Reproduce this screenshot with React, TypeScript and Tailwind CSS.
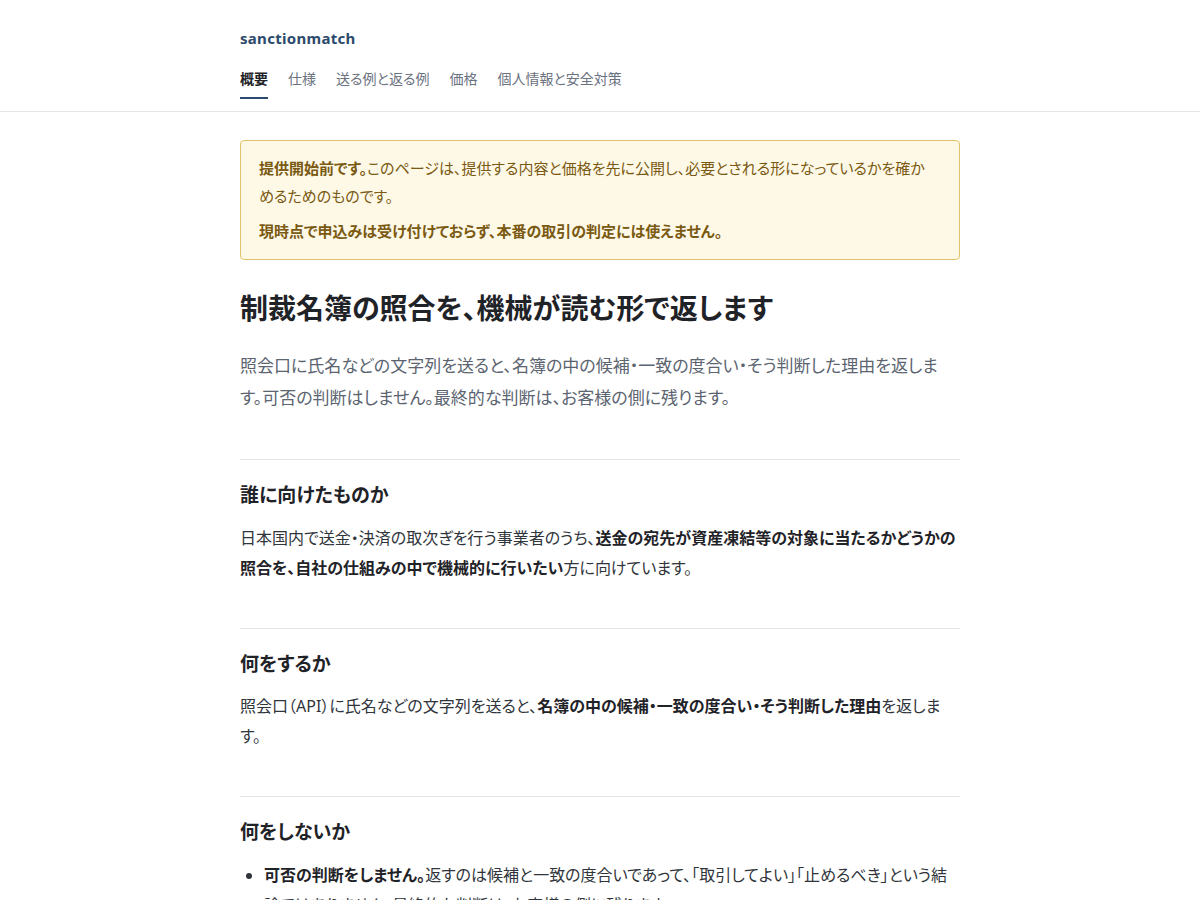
import React from 'react';

const NAV_ITEMS = ['概要', '仕様', '送る例と返る例', '価格', '個人情報と安全対策'];

const Section: React.FC<{ title: string; children: React.ReactNode }> = ({ title, children }) => (
    <section className="mt-[45px] border-t border-[#e3e5e8] pt-[22px]">
        <h2 className="text-[19px] font-bold leading-[1.4] text-[#1f2328]">{title}</h2>
        <div className="mt-[14px] text-[#30353b]">{children}</div>
    </section>
);

export default function App() {
    return (
        <div className="min-h-[900px] bg-white text-[#1f2328] [font-family:'Noto_Sans','Noto_Sans_CJK_JP',sans-serif] [font-feature-settings:'palt']">
            {/* ヘッダー */}
            <header className="border-b border-[#e3e5e8]">
                <div className="mx-auto w-[720px] pt-[26px] pb-3">
                    <div className="text-[15px] font-bold leading-6 tracking-[0.3px] text-[#2c4a6b]">sanctionmatch</div>
                    <nav className="mt-[17px] flex gap-5">
                        {NAV_ITEMS.map((item, i) => (
                            <a
                                key={item}
                                href="#"
                                className={`border-b-2 pb-[6px] text-[14px] leading-6 ${i === 0
                                    ? 'border-[#2c4a6b] font-bold text-[#1f2328]'
                                    : 'border-transparent text-[#6b7280]'
                                    }`}
                            >
                                {item}
                            </a>
                        ))}
                    </nav>
                </div>
            </header>

            <main className="mx-auto w-[720px] pt-7 pb-16">
                {/* 提供開始前の注意 */}
                <div className="rounded border border-[#e2c46b] bg-[#fef8e6] pl-[18px] pr-6 pt-[13px] pb-[14px] text-[15px] leading-7 text-[#7a5a12]">
                    <p>
                        <strong className="font-bold">提供開始前です。</strong>
                        このページは、提供する内容と価格を先に公開し、必要とされる形になっているかを確かめるためのものです。
                    </p>
                    <p className="mt-[7px] font-bold">現時点で申込みは受け付けておらず、本番の取引の判定には使えません。</p>
                </div>

                <h1 className="mt-[29px] text-[28px] font-bold leading-[1.4] text-[#1f2328]">
                    制裁名簿の照合を、機械が読む形で返します
                </h1>
                <p className="mt-[22px] mb-[1px] text-[17px] leading-8 text-[#5b6470]">
                    照会口に氏名などの文字列を送ると、名簿の中の候補・一致の度合い・そう判断した理由を返します。可否の判断はしません。最終的な判断は、お客様の側に残ります。
                </p>

                <Section title="誰に向けたものか">
                    <p className="text-[16px] leading-[30px]">
                        日本国内で送金・決済の取次ぎを行う事業者のうち、
                        <strong className="font-bold text-[#1f2328]">送金の宛先が資産凍結等の対象に当たるかどうかの照合を、自社の仕組みの中で機械的に行いたい</strong>
                        方に向けています。
                    </p>
                </Section>

                <Section title="何をするか">
                    <p className="text-[16px] leading-[30px]">
                        照会口（API）に氏名などの文字列を送ると、
                        <strong className="font-bold text-[#1f2328]">名簿の中の候補・一致の度合い・そう判断した理由</strong>
                        を返します。
                    </p>
                </Section>

                <Section title="何をしないか">
                    <ul className="list-disc pl-6 text-[16px] leading-[30px]">
                        <li>
                            <strong className="font-bold text-[#1f2328]">可否の判断をしません。</strong>
                            返すのは候補と一致の度合いであって、「取引してよい」「止めるべき」という結論ではありません。最終的な判断は、お客様の側に残ります。
                        </li>
                    </ul>
                </Section>
            </main>
        </div>
    );
}
